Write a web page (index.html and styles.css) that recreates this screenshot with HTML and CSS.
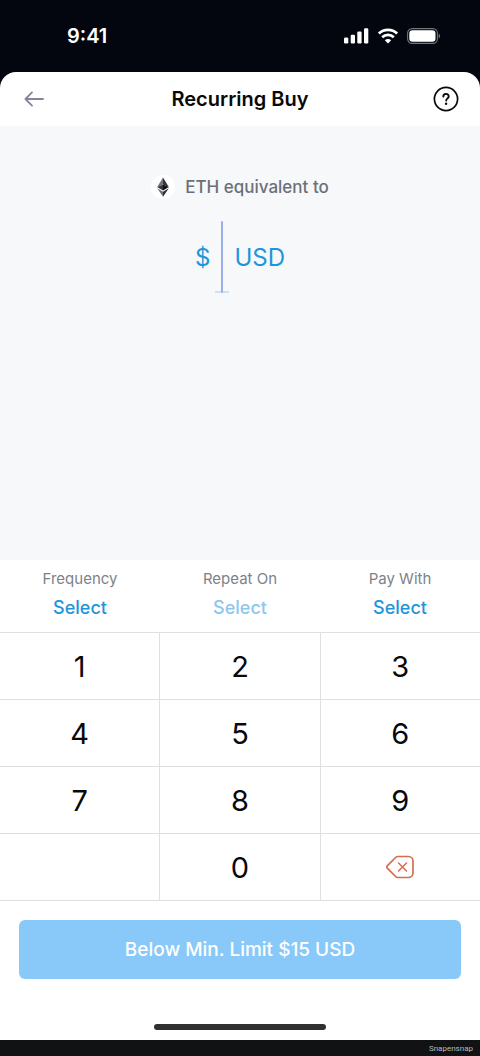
FILE: index.html
```html
<!DOCTYPE html>
<html lang="en">
<head>
<meta charset="utf-8">
<meta name="viewport" content="width=device-width, initial-scale=1">
<title>Recurring Buy</title>
<link rel="stylesheet" href="styles.css">
</head>
<body>
<div class="screen">
  <div class="status-bar">
    <time class="clock">9:41</time>
    <div class="indicators">
      <svg width="25" height="16" viewBox="0 0 25 16" fill="#fff" aria-label="Signal"><rect x="0" y="9.5" width="4.3" height="6" rx="1.2"/><rect x="6.7" y="6.8" width="4.3" height="8.7" rx="1.2"/><rect x="13.3" y="3.6" width="4.3" height="11.9" rx="1.2"/><rect x="20" y="0.3" width="4.3" height="15.2" rx="1.2"/></svg>
      <svg width="20" height="16" viewBox="0 0 20 16" fill="none" stroke="#fff" stroke-width="2.8" aria-label="Wi-Fi"><path d="M.9 5.6a13 13 0 0 1 18.2 0"/><path d="M4.2 9.2a8.3 8.3 0 0 1 11.6 0"/><path d="M10 15.4 6.8 12.2a4.6 4.6 0 0 1 6.4 0z" fill="#fff" stroke="none"/></svg>
      <svg width="34" height="16" viewBox="0 0 34 16" aria-label="Battery"><rect x=".6" y=".6" width="29.8" height="14.8" rx="4.6" fill="none" stroke="#73757c" stroke-width="1.1"/><rect x="2.3" y="2.3" width="26.2" height="11.4" rx="3.2" fill="#fff"/><path d="M31.7 5.5v5c1.8-.8 1.8-4.2 0-5z" fill="#73757c"/></svg>
    </div>
  </div>
  <main class="sheet">
    <header class="header">
      <button class="icon-button" type="button" aria-label="Back">
        <svg width="20" height="16" viewBox="0 0 20 16" fill="none" stroke="#85839d" stroke-width="1.8" stroke-linecap="round" stroke-linejoin="round"><path d="M19 8H1.4M8 1.4 1.4 8 8 14.6"/></svg>
      </button>
      <h1 class="title">Recurring Buy</h1>
      <button class="icon-button" type="button" aria-label="Help">
        <svg width="26" height="26" viewBox="0 0 26 26" fill="none" stroke="#08090b" stroke-width="1.7"><circle cx="13" cy="13" r="11.6"/><path d="M10.3 10.6c0-3.5 5.4-3.6 5.4-.2 0 2-2.5 2-2.5 4.2" stroke-width="1.9" stroke-linecap="round"/><circle cx="13.1" cy="17.8" r="1.2" fill="#08090b" stroke="none"/></svg>
      </button>
    </header>
    <section class="amount">
      <label class="asset" for="amount">
        <svg width="24" height="24" viewBox="0 0 24 24"><circle cx="12" cy="12" r="12" fill="#fff"/><path d="M12 2.5 6.2 12 12 9.4z" fill="#73737b"/><path d="M12 2.5 17.8 12 12 9.4z" fill="#343439"/><path d="M6.2 12 12 9.4v6.1z" fill="#38383d"/><path d="M17.8 12 12 9.4v6.1z" fill="#111114"/><path d="M6.2 13.3 12 16.7v5z" fill="#707077"/><path d="M17.8 13.3 12 16.7v5z" fill="#303034"/></svg>
        <span>ETH equivalent to</span>
      </label>
      <div class="amount-entry">
        <span>$</span>
        <span class="field"><input class="amount-input" id="amount" type="text" inputmode="decimal"><span class="caret"></span></span>
        <span>USD</span>
      </div>
    </section>
    <section class="options">
      <div class="option"><span class="option-label" id="frequency">Frequency</span><button class="option-value" type="button" aria-describedby="frequency">Select</button></div>
      <div class="option"><span class="option-label" id="repeat">Repeat On</span><button class="option-value" type="button" disabled aria-describedby="repeat">Select</button></div>
      <div class="option"><span class="option-label" id="pay">Pay With</span><button class="option-value" type="button" aria-describedby="pay">Select</button></div>
    </section>
    <section class="keypad" aria-label="Keypad">
      <button class="key" type="button">1</button>
      <button class="key" type="button">2</button>
      <button class="key" type="button">3</button>
      <button class="key" type="button">4</button>
      <button class="key" type="button">5</button>
      <button class="key" type="button">6</button>
      <button class="key" type="button">7</button>
      <button class="key" type="button">8</button>
      <button class="key" type="button">9</button>
      <div class="key"></div>
      <button class="key" type="button">0</button>
      <button class="key" type="button" aria-label="Delete">
        <svg width="28" height="24" viewBox="0 0 28 24" fill="none" stroke="#d66d50" stroke-width="1.7" stroke-linecap="round" stroke-linejoin="round"><path d="M12 1.5h10.5a4.5 4.5 0 0 1 4.5 4.5v12a4.5 4.5 0 0 1-4.5 4.5H12q-1.4 0-2.4-1L1.5 13.4q-1.3-1.4 0-2.8L9.6 2.5q1-1 2.4-1z"/><path d="m12.5 8 8 8m0-8-8 8" stroke-width="1.5"/></svg>
      </button>
    </section>
    <div class="actions">
      <button class="submit" type="button" disabled>Below Min. Limit $15 USD</button>
    </div>
    <div class="home-indicator"></div>
  </main>
  <footer class="credit">Snapensnap</footer>
</div>
</body>
</html>
```
FILE: styles.css
```css
* {
  box-sizing: border-box;
}

body {
  margin: 0;
  background: #03060f;
  color: #08090b;
  font-family: Inter, "Liberation Sans", sans-serif;
}

button {
  padding: 0;
  border: 0;
  background: none;
  color: inherit;
  font: inherit;
}

svg {
  display: block;
  flex: none;
}

.screen {
  display: flex;
  flex-direction: column;
  min-height: 100vh;
}

.status-bar {
  display: flex;
  align-items: center;
  justify-content: space-between;
  height: 72px;
  padding: 0 39px 0 67px;
  color: #fff;
}

.clock {
  font-size: 20px;
  font-weight: 600;
}

.indicators {
  display: flex;
  align-items: center;
  gap: 9px;
}

.sheet {
  display: flex;
  flex: 1;
  flex-direction: column;
  border-radius: 16px 16px 0 0;
  background: #fff;
}

.header {
  display: flex;
  align-items: center;
  justify-content: space-between;
  height: 54px;
  padding: 0 21px;
}

.icon-button {
  display: flex;
  align-items: center;
  justify-content: center;
  width: 26px;
  height: 26px;
}

.title {
  margin: 0;
  font-size: 20px;
  font-weight: 600;
}

.amount {
  display: flex;
  flex: 1;
  flex-direction: column;
  align-items: center;
  gap: 22px;
  padding: 49px 0;
  background: #f6f8fa;
}

.asset {
  display: flex;
  align-items: center;
  gap: 10px;
  color: #6b7077;
  font-size: 17px;
  font-weight: 500;
  line-height: 24px;
}

.amount-entry {
  display: flex;
  align-items: center;
  gap: 5px;
  color: #1f95dc;
  font-size: 24px;
}

.field {
  position: relative;
  width: 14px;
}

.amount-input {
  display: block;
  width: 100%;
  height: 72px;
  padding: 0;
  border: 0;
  border-bottom: 2px solid #c9e2f8;
  outline: 0;
  background: none;
  color: inherit;
  font: inherit;
}

.caret {
  position: absolute;
  top: 0;
  bottom: 0;
  left: 6px;
  width: 2px;
  border-radius: 1px;
  background: #98aee8;
}

.options {
  display: grid;
  grid-template-columns: repeat(3, 1fr);
  height: 72px;
  padding-top: 8px;
}

.option {
  display: flex;
  flex-direction: column;
  align-items: center;
  gap: 6px;
}

.option-label {
  color: #7d8289;
  font-size: 15px;
  line-height: 22px;
}

.option-value {
  color: #1f95dc;
  font-size: 18px;
  font-weight: 500;
  line-height: 24px;
}

.option-value:disabled {
  color: #8cc7ed;
}

.keypad {
  display: grid;
  grid-template-columns: repeat(3, 1fr);
  grid-auto-rows: 66px;
  gap: 1px;
  padding: 1px 0;
  background: #dedfe1;
}

.key {
  display: flex;
  align-items: center;
  justify-content: center;
  background: #fff;
  font-size: 29px;
}

.actions {
  padding: 19px 19px 45px;
}

.submit {
  width: 100%;
  height: 59px;
  border-radius: 6px;
  background: #88c9f9;
  color: #fff;
  font-size: 19px;
  font-weight: 500;
}

.home-indicator {
  align-self: center;
  width: 36%;
  height: 6px;
  margin-bottom: 10px;
  border-radius: 3px;
  background: #303032;
}

.credit {
  height: 16px;
  padding-right: 7px;
  background: #111214;
  color: #b9babd;
  font-family: Roboto, "Liberation Sans", sans-serif;
  font-size: 8px;
  line-height: 18px;
  text-align: right;
}
```
